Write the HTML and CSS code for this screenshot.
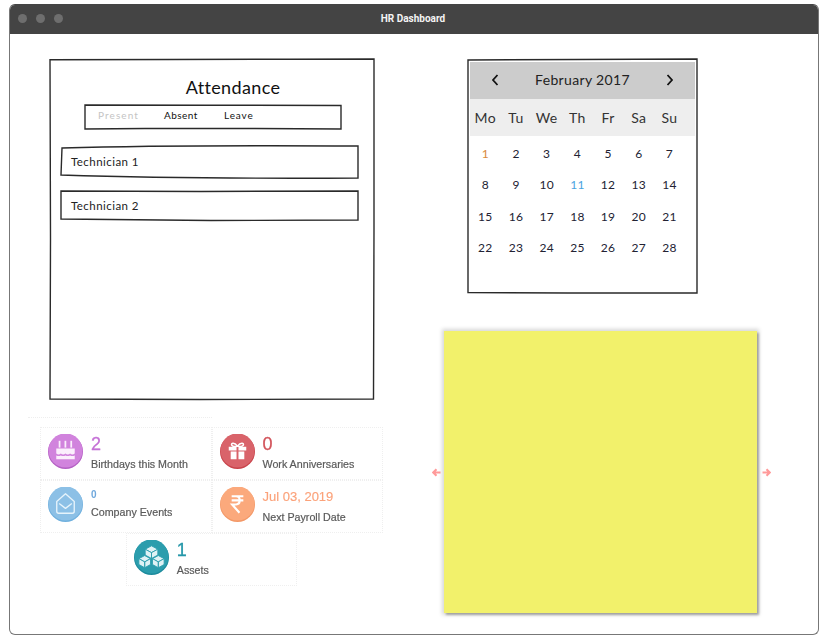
FILE: index.html
```html
<!DOCTYPE html>
<html lang="en">
<head>
<meta charset="utf-8">
<title>HR Dashboard</title>
<link rel="stylesheet" href="styles.css">
</head>
<body>
<div class="window">
  <header class="titlebar">
    <div class="dots"><span></span><span></span><span></span></div>
    <div class="wintitle">HR Dashboard</div>
  </header>
  <main class="content">
    <div class="left">
      <section class="attendance sketch">
        <svg class="frame" viewBox="0 0 324 340" preserveAspectRatio="none"><path d="M0 .8 L120 .5 L240 .2 L324 0 L324 170 L323.5 340 L150 340.5 L0 340 L.5 180 Z"/></svg>
        <h1 class="att-title">Attendance</h1>
        <div class="tabs sketch">
          <svg class="frame" viewBox="0 0 256 24" preserveAspectRatio="none"><path d="M0 0 L120 .2 L256 .5 L256 24 L170 23.500 L60 23.500 L0 24 Z"/></svg>
          <span class="tab muted">Present</span>
          <span class="tab t2">Absent</span>
          <span class="tab t3">Leave</span>
        </div>
        <div class="tech tech1 sketch">
          <svg class="frame" viewBox="0 0 297 32" preserveAspectRatio="none"><path d="M1 2 Q110 -1 297 0 L297 32 Q130 33 0 29 Z"/></svg>
          Technician 1
        </div>
        <div class="tech tech2 sketch">
          <svg class="frame" viewBox="0 0 297 31" preserveAspectRatio="none"><path d="M0 0 L140 .5 L297 0 L297 30 L150 30.5 L0 29 Z"/></svg>
          Technician 2
        </div>
      </section>
      <div class="faint"></div>
      <section class="stats">
        <div class="stat">
          <svg class="ico" viewBox="0 0 36 36"><circle cx="18" cy="18" r="18" fill="#b45fc4"/><circle cx="18" cy="17" r="17.5" fill="#d183dd"/><g fill="#fbeefc"><rect x="11" y="7" width="1.800" height="7"/><rect x="17" y="7" width="1.800" height="7"/><rect x="23" y="7" width="1.800" height="7"/><path d="M8.500 15h19v5q-2.400 2-4.800 0q-2.300 2-4.700 0q-2.400 2-4.800 0q-2.300 2-4.700 0z"/><path d="M8.500 22q2.400 1.500 4.700 0q2.400 1.500 4.800 0q2.300 1.500 4.700 0q2.400 1.500 4.800 0v4h-19z"/></g></svg>
          <div class="txt"><div class="num c-purple">2</div><div class="lbl">Birthdays this Month</div></div>
        </div>
        <div class="stat">
          <svg class="ico" viewBox="0 0 36 36"><circle cx="18" cy="18" r="18" fill="#c8434a"/><circle cx="18" cy="17" r="17.5" fill="#d9636a"/><g fill="#fff"><path d="M9 13h8v4H9zM19 13h8v4h-8zM11 18h6v8h-6zM19 18h6v8h-6z"/><path d="M18 12.500c-3-4-7-3.500-6-1 .6 1.300 3.500 1.500 6 1zc3-4 7-3.500 6-1-.6 1.300-3.500 1.500-6 1z" fill="none" stroke="#fff" stroke-width="1.500"/></g></svg>
          <div class="txt"><div class="num c-red">0</div><div class="lbl">Work Anniversaries</div></div>
        </div>
        <div class="stat">
          <svg class="ico" viewBox="0 0 36 36"><circle cx="18" cy="18" r="18" fill="#6fb0de"/><circle cx="18" cy="17" r="17.500" fill="#8cc0e6"/><g fill="none" stroke="#e6f3fb" stroke-width="1.400" stroke-linejoin="round"><path d="M9 15 L18 7 L27 15 V25 Q27 27 25 27 H11 Q9 27 9 25 Z"/><path d="M11.500 17 L18 22 L24.500 17"/></g></svg>
          <div class="txt"><div class="num small c-blue">0</div><div class="lbl tight">Company Events</div></div>
        </div>
        <div class="stat">
          <svg class="ico" viewBox="0 0 36 36"><circle cx="18" cy="18" r="18" fill="#f39867"/><circle cx="18" cy="17" r="17.500" fill="#fba97c"/><path d="M12 9.500h12M12 13.800h12M13 9.500h3.500c5 0 5 8.500 0 8.500H12.500L20 26.500" fill="none" stroke="#fff" stroke-width="2.200"/></svg>
          <div class="txt"><div class="num date c-orange">Jul 03, 2019</div><div class="lbl">Next Payroll Date</div></div>
        </div>
        <div class="stat assets">
          <svg class="ico" viewBox="0 0 36 36"><circle cx="18" cy="18" r="18" fill="#1c8a9c"/><circle cx="18" cy="17" r="17.500" fill="#2b9dad"/><g fill="#dff2f5" stroke="#2b9dad" stroke-width=".9" stroke-linejoin="round"><path d="M18 6l6.500 3.500-6.500 3.500-6.500-3.500z"/><path d="M11.500 9.500l6.500 3.500v6l-6.500-3.500zM24.500 9.500L18 13v6l6.500-3.500z"/><path d="M11 16l6 3.200-6 3.300-6-3.300z"/><path d="M5 19.200l6 3.300v6l-6-3.300zM17 19.200l-6 3.300v6l6-3.300z"/><path d="M25 16l6 3.200-6 3.300-6-3.300z"/><path d="M19 19.200l6 3.300v6l-6-3.300zM31 19.200l-6 3.300v6l6-3.300z"/></g></svg>
          <div class="txt"><div class="num c-teal">1</div><div class="lbl">Assets</div></div>
        </div>
      </section>
    </div>
    <div class="right">
      <section class="calendar sketch">
        <svg class="frame" viewBox="0 0 229 234" preserveAspectRatio="none"><path d="M0 1 L110 .5 L229 0 L229 234 L100 234 L0 233.500 Z"/></svg>
        <div class="cal-head">
          <svg class="chev" viewBox="0 0 8 12"><path d="M6.500 1 L2 6 L6.500 11" /></svg>
          <span class="cal-title">February 2017</span>
          <svg class="chev" viewBox="0 0 8 12"><path d="M1.500 1 L6 6 L1.500 11" /></svg>
        </div>
        <div class="cal-week"><span>Mo</span><span>Tu</span><span>We</span><span>Th</span><span>Fr</span><span>Sa</span><span>Su</span></div>
        <div class="cal-days">
          <span class="d-orange">1</span><span>2</span><span>3</span><span>4</span><span>5</span><span>6</span><span>7</span>
          <span>8</span><span>9</span><span>10</span><span class="d-blue">11</span><span>12</span><span>13</span><span>14</span>
          <span>15</span><span>16</span><span>17</span><span>18</span><span>19</span><span>20</span><span>21</span>
          <span>22</span><span>23</span><span>24</span><span>25</span><span>26</span><span>27</span><span>28</span>
        </div>
      </section>
      <section class="carousel">
        <svg class="arrow" viewBox="0 0 9 9"><path d="M8.500 4.500H1.500M4.500 1.200L1.200 4.500L4.500 7.800"/></svg>
        <div class="sticky"></div>
        <svg class="arrow arrow-r" viewBox="0 0 9 9"><path d="M.5 4.500H7.500M4.500 1.200L7.800 4.500L4.500 7.800"/></svg>
      </section>
    </div>
  </main>
</div>
</body>
</html>
```

FILE: styles.css
```css
* { box-sizing: border-box; }
html, body { margin: 0; background: #fff; }
body { height: 642px; overflow: hidden; }

.window {
  margin: 4px 0 0 9px;
  width: 810px;
  height: 631px;
  border: 1px solid #777;
  border-top-color: #444;
  border-radius: 6px;
  overflow: hidden;
  background: #fff;
}
.titlebar {
  height: 29px;
  background: #444;
  display: flex;
  align-items: center;
  position: relative;
}
.dots { display: flex; gap: 9px; padding-left: 8px; margin-top: -2px; }
.dots span { width: 9px; height: 9px; border-radius: 50%; background: #6e6e6e; }
.wintitle {
  position: absolute;
  left: 0; right: 2px; top: 0;
  text-align: center;
  color: #f4f4f4;
  font: 700 10px/27px Roboto, "Liberation Sans", sans-serif;
}

.content { display: flex; padding: 25px 0 0 40px; }
.left { width: 324px; flex: none; }
.right { width: 229px; flex: none; margin-left: 94px; }

.sketch { position: relative; }
.frame { position: absolute; inset: 0; width: 100%; height: 100%; overflow: visible; pointer-events: none; }
.frame path { fill: none; stroke: #2a2a2a; stroke-width: 1.400; vector-effect: non-scaling-stroke; }

.attendance, .calendar, .tech, .tabs {
  font-family: Lato, "Open Sans", sans-serif;
  font-weight: 300;
  color: #222;
}
.attendance { height: 340px; padding: 1px 16px 0 11px; }
.att-title {
  margin: 17px 0 0;
  font-size: 18px;
  line-height: 20px;
  font-weight: 400;
  letter-spacing: .35px;
  text-align: center;
  padding-left: 47px;
  color: #111;
}
.tabs {
  margin: 8px 0 0 24px;
  width: 256px;
  height: 24px;
  display: flex;
  align-items: center;
  padding: 0 0 4px 13px;
  font-size: 10px;
}
.tab { letter-spacing: .45px; color: #111; font-weight: 400; }
.tab.muted { color: #c4c4c4; width: 66px; letter-spacing: 1.100px; }
.tab.t2 { width: 60px; }
.tab.t3 { letter-spacing: .9px; }
.tech {
  width: 297px;
  display: flex;
  align-items: center;
  padding: 0 0 2px 10px;
  font-size: 11.500px;
  letter-spacing: .45px;
  font-weight: 400;
}
.tech1 { height: 32px; margin-top: 17px; }
.tech2 { height: 30px; margin-top: 13px; }

.faint { margin: 18px 0 0 -22px; width: 184px; border-top: 1px dotted #eee; height: 1px; }

.stats {
  margin: 9px 0 0 -10px;
  width: 343px;
  display: grid;
  grid-template-columns: 171.500px 171.500px;
  font-family: "Liberation Sans", Arial, sans-serif;
  filter: blur(.35px);
}
.stat {
  height: 53px;
  width: 171.500px;
  display: flex;
  gap: 8px;
  padding: 7px 0 0 8px;
  outline: 1px dotted #efefef;
  outline-offset: -1px;
}
.stat.assets { grid-column: 1 / span 2; justify-self: center; }
.ico { width: 35px; height: 35px; flex: none; }
.num { font-size: 18px; line-height: 20px; -webkit-text-stroke: .3px currentColor; }
.num.small { font-size: 10px; font-weight: 700; line-height: 16px; -webkit-text-stroke: 0; }
.num.date { font-size: 13px; -webkit-text-stroke: .15px currentColor; }
.lbl { font-size: 10.700px; line-height: 14px; margin-top: 3px; color: #5a5a5a; -webkit-text-stroke: .2px currentColor; }
.lbl.tight { margin-top: 2px; }
.c-purple { color: #c572d6; }
.c-red { color: #d2545b; }
.c-blue { color: #6fa8dc; }
.c-orange { color: #fba27a; }
.c-teal { color: #2597a9; }

.calendar { height: 234px; padding: 3px 2px 0; }
.cal-head {
  height: 37px;
  background: #ccc;
  display: flex;
  align-items: center;
  justify-content: space-between;
  padding: 0 21px 2px;
}
.chev { width: 8px; height: 12px; }
.chev path { fill: none; stroke: #111; stroke-width: 1.800; }
.cal-title { font-size: 14px; letter-spacing: .35px; font-weight: 400; color: #222; }
.cal-week {
  height: 37px;
  background: #eee;
  display: grid;
  grid-template-columns: repeat(7, 30.700px);
  align-items: center;
  text-align: center;
  font-size: 14px;
  font-weight: 400;
  letter-spacing: .4px;
  color: #333;
}
.cal-days {
  display: grid;
  grid-template-columns: repeat(7, 30.700px);
  grid-auto-rows: 31.300px;
  align-items: center;
  text-align: center;
  padding-top: 2px;
  font-size: 12px;
  font-weight: 400;
  letter-spacing: .3px;
  color: #223;
}
.d-orange { color: #d98a3c; }
.d-blue { color: #4aa3df; }

.carousel {
  display: flex;
  align-items: center;
  gap: 3px;
  margin: 38px 0 0 -36px;
  width: 339px;
}
.sticky {
  flex: none;
  width: 313px;
  height: 282px;
  background: #f2f16b;
  box-shadow: 2px 2px 2px rgba(0,0,0,.28), 0 0 4px 2px rgba(0,0,0,.16);
}
.arrow { width: 9px; height: 9px; flex: none; }
.arrow-r { margin-left: 2px; }
.arrow path { fill: none; stroke: #ff9a9a; stroke-width: 2.100; }
```
